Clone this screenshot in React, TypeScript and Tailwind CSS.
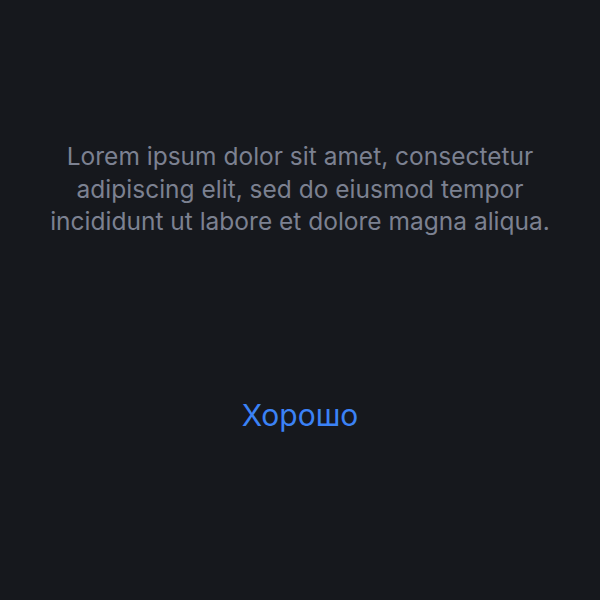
export default function App() {
  return (
    <div className="h-[600px] w-[600px] bg-[#16181d] flex flex-col items-center font-['Inter',sans-serif]">
      {/* Message */}
      <p className="mt-[140px] px-[48px] text-center text-[24.5px] leading-[32.5px] text-[#7c8191]">
        Lorem ipsum dolor sit amet, consectetur adipiscing elit, sed do eiusmod tempor incididunt ut labore et dolore magna aliqua.
      </p>

      {/* Action */}
      <button className="mt-[152px] px-6 py-2 text-[30px] leading-[34px] text-[#3b82f6]">
        Хорошо
      </button>
    </div>
  );
}
